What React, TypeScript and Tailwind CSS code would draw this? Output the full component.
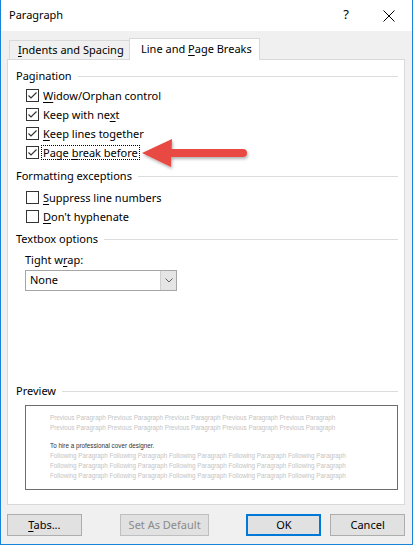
import React from 'react';

function Check({ checked }: { checked?: boolean }) {
  return (
    <span className="w-[13px] h-[13px] border border-[#333] bg-white flex items-center justify-center shrink-0">
      {checked && (
        <svg width="11" height="11" viewBox="0 0 11 11">
          <path d="M1.5 5.5 L4 8 L9.5 2.5" fill="none" stroke="#333" strokeWidth="1.2" />
        </svg>
      )}
    </span>
  );
}

function Row({ checked, children, focus }: { checked?: boolean; children: React.ReactNode; focus?: boolean }) {
  return (
    <div className="h-[19px] flex items-center pl-[18px] gap-[2px]">
      <Check checked={checked} />
      <span className={`leading-[13px] px-[1px] ${focus ? 'border border-dotted border-black' : 'border border-transparent'}`}>
        {children}
      </span>
    </div>
  );
}

function Header({ title, className = '' }: { title: string; className?: string }) {
  return (
    <div className={`h-[19px] flex items-center pl-[8px] pr-[6px] ${className}`}>
      <span>{title}</span>
      <span className="flex-1 h-px bg-[#dcdcdc] ml-[6px]" />
    </div>
  );
}

const U = ({ c }: { c: string }) => <span className="underline underline-offset-[2px]">{c}</span>;

export default function App() {
  const prev = 'Previous Paragraph Previous Paragraph Previous Paragraph Previous Paragraph Previous Paragraph';
  const next = 'Following Paragraph Following Paragraph Following Paragraph Following Paragraph Following Paragraph';
  return (
    <div className="w-[413px] h-[545px] bg-[#f0f0f0] border-x border-b border-[#1883d7] flex flex-col relative text-[11px] text-black font-['Noto_Sans',sans-serif] overflow-hidden">
      {/* title bar */}
      <div className="h-[31px] bg-white flex items-center pl-[8px] shrink-0">
        <span className="text-[11px]">Paragraph</span>
        <span className="ml-auto text-[13px] mr-[34px] -mt-[1px]">?</span>
        <svg width="12" height="12" viewBox="0 0 12 12" className="mr-[17px]">
          <path d="M0.5 0.5 L11.5 11.5 M11.5 0.5 L0.5 11.5" stroke="#000" strokeWidth="1" />
        </svg>
      </div>

      {/* tabs */}
      <div className="pt-[7px] pl-[6px] pr-[7px] flex flex-col">
        <div className="h-[21px] flex items-end pl-[2px]">
          <div className="h-[19px] w-[120px] border-t border-l border-[#d9d9d9] bg-[#f0f0f0] flex items-center pl-[8px]">
            <span><U c="I" />ndents and Spacing</span>
          </div>
          <div className="h-[22px] w-[131px] border-t border-x border-[#d9d9d9] bg-white -mb-[1px] relative z-10 flex items-center pl-[11px] pb-[1px]">
            <span>Line and <U c="P" />age Breaks</span>
          </div>
        </div>

        {/* panel */}
        <div className="h-[446px] border border-[#d9d9d9] bg-white flex flex-col">
          <Header title="Pagination" className="mt-[7px]" />
          <Row checked><U c="W" />idow/Orphan control</Row>
          <Row checked>Keep with ne<U c="x" />t</Row>
          <Row checked><U c="K" />eep lines together</Row>
          <Row checked focus>Page <U c="b" />reak before</Row>

          <Header title="Formatting exceptions" className="mt-[5px]" />
          <div className="mt-[2px]">
            <Row><U c="S" />uppress line numbers</Row>
            <Row><U c="D" />on't hyphenate</Row>
          </div>

          <Header title="Textbox options" className="mt-[4px]" />
          <div className="mt-[2px] h-[19px] flex items-center pl-[17px]">
            <span>Tight w<U c="r" />ap:</span>
          </div>
          <div className="ml-[17px] w-[152px] h-[21px] border border-[#a6a6a6] flex">
            <div className="flex-1 flex items-center pl-[4px]">None</div>
            <div className="w-[16px] bg-[#e5e5e5] border-l border-[#cfcfcf] flex items-center justify-center">
              <svg width="8" height="5" viewBox="0 0 8 5">
                <path d="M0.5 0.5 L4 4 L7.5 0.5" fill="none" stroke="#606060" strokeWidth="1" />
              </svg>
            </div>
          </div>

          <Header title="Preview" className="mt-[91px]" />
          <div className="mt-[4px] ml-[17px] mr-[6px] h-[85px] border border-[#6d6d6d] pt-[7px] pl-[24px] overflow-hidden font-['Liberation_Sans',sans-serif] text-[6.3px] leading-[10px] whitespace-nowrap">
            <div className="text-[#c4c4c4]">{prev}</div>
            <div className="text-[#c4c4c4]">{prev}</div>
            <div className="text-[#333] mt-[8px]">To hire a professional cover designer.</div>
            <div className="text-[#c4c4c4]">{next}</div>
            <div className="text-[#c4c4c4]">{next}</div>
            <div className="text-[#c4c4c4]">{next}</div>
          </div>
        </div>

        {/* buttons */}
        <div className="mt-[9px] flex h-[22px]">
          <button className="w-[75px] h-[22px] bg-[#e1e1e1] border border-[#adadad] flex items-center justify-center">
            <span><U c="T" />abs...</span>
          </button>
          <button disabled className="ml-[38px] w-[90px] h-[22px] bg-[#e1e1e1] border border-[#bfbfbf] text-[#8a8a8a] flex items-center justify-center">
            Set As Default
          </button>
          <button className="ml-[37px] w-[75px] h-[22px] bg-[#e1e1e1] border-2 border-[#0078d7] flex items-center justify-center">
            OK
          </button>
          <button className="ml-[9px] w-[75px] h-[22px] bg-[#e1e1e1] border border-[#adadad] flex items-center justify-center">
            Cancel
          </button>
        </div>
      </div>

      {/* red arrow callout */}
      <svg className="absolute left-0 top-0 pointer-events-none" width="413" height="545" viewBox="0 0 413 545">
        <defs>
          <filter id="sh" x="-20%" y="-40%" width="140%" height="180%">
            <feDropShadow dx="1" dy="2" stdDeviation="1.5" floodColor="#000" floodOpacity="0.3" />
          </filter>
        </defs>
        <g filter="url(#sh)" fill="#e84a42">
          <rect x="165" y="149" width="81" height="8" rx="4" />
          <path d="M141 153 L171 139 L170 167 Z" />
        </g>
      </svg>
    </div>
  );
}
